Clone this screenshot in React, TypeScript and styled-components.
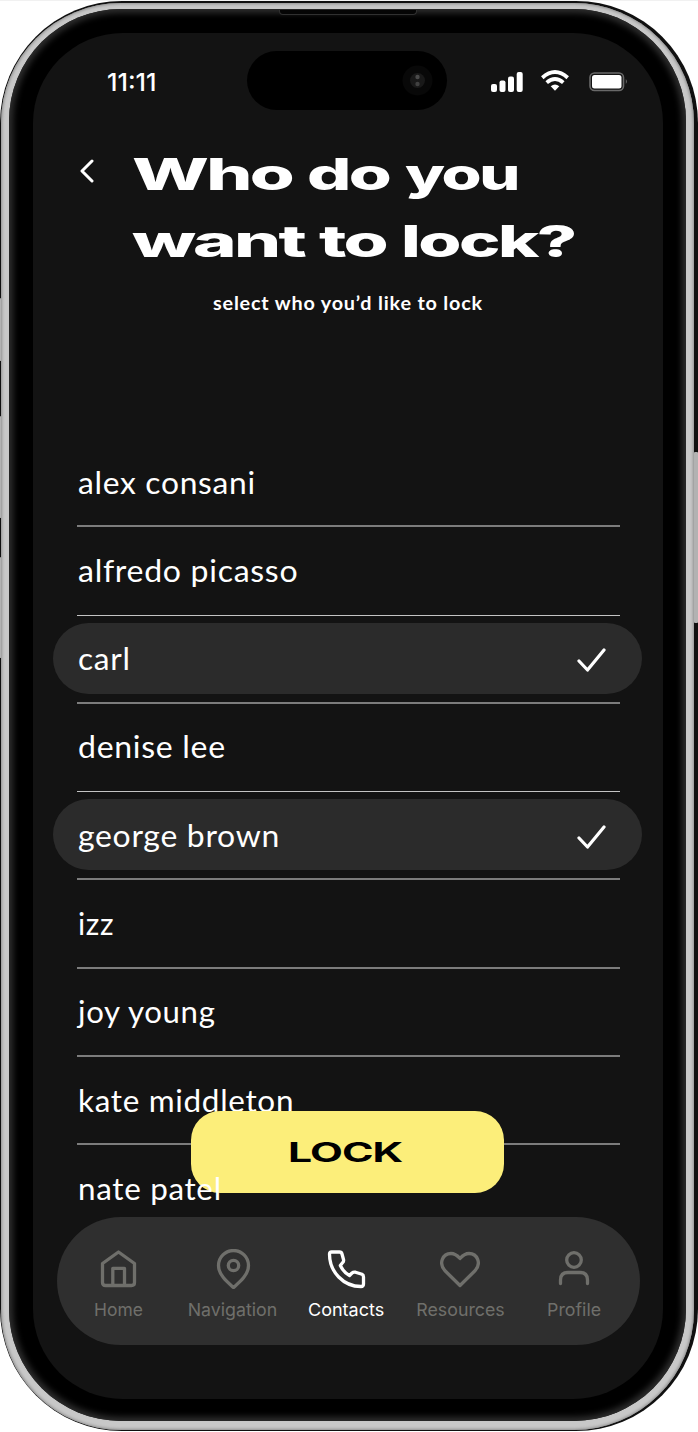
import React, { useLayoutEffect, useRef, useState } from "react";
import styled, { createGlobalStyle } from "styled-components";

const GlobalStyle = createGlobalStyle`
  * { box-sizing: border-box; }
  body { margin: 0; background: #fff; overflow: hidden; }
  button { font: inherit; border: 0; padding: 0; background: none; }
`;

const Stage = styled.div`
  position: relative;
  width: 698px;
  height: 1432px;
  padding-top: 1px;
  border-top: 1px solid #f1f1f1;
  font-family: Lato, "Liberation Sans", sans-serif;
  color: #fff;
`;

const Edge = styled.div`
  height: 1430px;
  margin-top: -1px;
  padding: 2px 4px 1px 1px;
  border-radius: 122px;
  background: #101010;
`;

const Metal = styled.div`
  height: 100%;
  padding: 6px 8px 9px;
  border-radius: 120px;
  background: #c8c8c8;
  box-shadow: inset 0 0 3px 1px #8e8e8e;
`;

const Bezel = styled.div`
  height: 100%;
  padding: 24px 23px 22px 24px;
  border-radius: 112px;
  background: #000;
  box-shadow: inset 0 0 6px 4px #2e2e2e;
`;

const Screen = styled.main`
  height: 1366px;
  padding: 18px 0 0;
  border-radius: 90px;
  background: #131313;
  display: flex;
  flex-direction: column;
`;

const SideButton = styled.i<{ $top: number; $height: number; $right?: boolean }>`
  position: absolute;
  top: ${(p) => p.$top}px;
  ${(p) => (p.$right ? "right: 0; width: 4px;" : "left: 0; width: 1px;")}
  height: ${(p) => p.$height}px;
  border-radius: 1px;
  background: #b2b2b2;
`;

const Speaker = styled.i`
  position: absolute;
  left: 279px;
  top: 9px;
  width: 138px;
  height: 5px;
  border: 1px solid #303030;
  border-top: 0;
  border-radius: 0 0 4px 4px;
  background: #050505;
`;

const StatusBar = styled.header`
  height: 59px;
  display: flex;
  align-items: center;
  padding: 0 35px 0 74px;
`;

const Clock = styled.div`
  width: 140px;
  font: 500 24.7px/30px Inter, sans-serif;
  padding-top: 2px;
`;

const Island = styled.div`
  width: 200px;
  height: 59px;
  border-radius: 30px;
  background: #000;
  display: flex;
  align-items: center;
  justify-content: flex-end;
  padding-right: 14px;
`;

const StatusIcons = styled.svg`
  margin-left: auto;
  margin-top: 2px;
`;

const TitleBar = styled.section`
  display: flex;
  height: 167px;
  padding: 31px 0 0 46px;
`;

const BackButton = styled.button`
  width: 53px;
  height: 59px;
  display: flex;
  align-items: center;
`;

const Title = styled.h1`
  margin: 0;
  font: 800 43.6px/67px Inter, sans-serif;
  letter-spacing: -1.6px;
`;

const TitleLine = styled.span`
  display: flex;
  gap: 15px;
`;

const FitBox = styled.span<{ $width: number }>`
  display: inline-block;
  width: ${(p) => p.$width}px;
  text-align: left;
  white-space: nowrap;
`;

const FitInner = styled.span`
  display: inline-block;
  transform-origin: 0 50%;
`;

/* Stretches a run of text horizontally so that it spans a given width. */
function Fit({ width, children }: { width: number; children: string }) {
  const ref = useRef<HTMLSpanElement>(null);
  const [scale, setScale] = useState(1);
  useLayoutEffect(() => {
    if (ref.current) setScale(width / ref.current.offsetWidth);
  }, [width, children]);
  return (
    <FitBox $width={width}>
      <FitInner ref={ref} style={{ transform: `scaleX(${scale})` }}>
        {children}
      </FitInner>
    </FitBox>
  );
}

const Subtitle = styled.p`
  margin: 0 0 0 180px;
  height: 162px;
  padding-top: 13px;
  font: 700 19.5px/26px Lato, sans-serif;
  letter-spacing: 0.8px;
`;

const List = styled.ul`
  list-style: none;
  margin: 0;
  padding: 0 21px 0 20px;
`;

const Row = styled.li<{ $above?: boolean }>`
  position: relative;
  height: 88.3px;
  z-index: ${(p) => (p.$above ? 2 : 0)};
  display: flex;
  flex-direction: column;
`;

const Pill = styled.div<{ $selected?: boolean }>`
  height: 71px;
  margin-top: 7px;
  padding: 0 36px 0 25px;
  border-radius: 36px;
  background: ${(p) => (p.$selected ? "#2b2b2b" : "transparent")};
  display: flex;
  align-items: center;
  justify-content: space-between;
  font: 400 31.6px/40px Lato, sans-serif;
  letter-spacing: 0.7px;
`;

const Divider = styled.hr<{ $soft?: boolean }>`
  width: 543px;
  height: ${(p) => (p.$soft ? 2 : 1)}px;
  margin: auto 0 0 24px;
  border: 0;
  background: ${(p) => (p.$soft ? "#7c7c7c" : "#c4c4c4")};
`;

const LockButton = styled.button`
  position: absolute;
  z-index: 1;
  left: 191px;
  top: 1110px;
  width: 313px;
  height: 82px;
  padding-right: 5px;
  border-radius: 29px;
  background: #fcee7a;
  color: #000;
  font: 700 26.6px/82px Inter, sans-serif;
  letter-spacing: -0.6px;
`;

const TabBar = styled.nav`
  position: absolute;
  z-index: 3;
  left: 57px;
  top: 1216px;
  width: 583px;
  height: 128px;
  padding: 32px 9px 0 5px;
  border-radius: 64px;
  background: #2f2f2f;
  display: flex;
`;

const Tab = styled.button<{ $active?: boolean }>`
  flex: 1;
  display: flex;
  flex-direction: column;
  align-items: center;
  gap: 9px;
  color: ${(p) => (p.$active ? "#fff" : "#6f6f6b")};
  font: 400 17.8px/24px Inter, sans-serif;
`;

const contacts = [
  { name: "alex consani", width: 178, soft: true },
  { name: "alfredo picasso", width: 220 },
  { name: "carl", width: 53, soft: true, selected: true },
  { name: "denise lee", width: 148 },
  { name: "george brown", width: 202, soft: true, selected: true },
  { name: "izz", width: 36, soft: true },
  { name: "joy young", width: 138, soft: true },
  { name: "kate middleton", width: 216, soft: true },
];

const stroke = {
  fill: "none",
  stroke: "currentColor",
  strokeWidth: 3.3,
  strokeLinecap: "round" as const,
  strokeLinejoin: "round" as const,
};

const tabs = [
  { label: "Home", width: 49, art: <><path d="M3.500 14.500 19.500 3 35.500 14.500V33.500Q35.500 36.500 32.500 36.500H6.500Q3.500 36.500 3.500 33.500Z" /><path d="M13.800 36V19.300H25.500V36" /></> },
  { label: "Navigation", width: 90, art: <><path d="M20.500 38.500C15.500 34 5.500 26.500 5.500 16.500A15 15 0 0 1 35.500 16.500C35.500 26.500 25.500 34 20.500 38.500Z" /><circle cx="20.500" cy="16.500" r="5.200" /></> },
  { label: "Contacts", width: 76, active: true, art: <path d="M3.500 5Q3.500 3 5.500 3H13.500Q15.500 3 16 5L17.500 10.500Q18 12.500 16.500 13.800L14.300 16.500C16.500 21 19.500 24.500 23.500 26.500L26 24Q27.500 22.700 29.500 23.200L36 25.300Q37.500 26 37.500 28V35Q37.500 37.500 35 37.500C17.500 37.500 3.500 23 3.500 5Z" /> },
  { label: "Resources", width: 88, art: <path d="M20 36.500 4.800 21.500C-1.500 14.500 2.500 4.500 11 4.500Q15.500 4.500 20 9.500Q24.500 4.500 29 4.500C37.500 4.500 41.500 14.500 35.200 21.500Z" /> },
  { label: "Profile", width: 54, art: <><circle cx="20" cy="11" r="7.300" /><path d="M6.500 34.500V31Q6.500 23.500 14 23.500H26Q33.500 23.500 33.500 31V34.500" /></> },
];

const CheckMark = styled.svg`
  margin-top: 4px;
`;

function Check() {
  return (
    <CheckMark width="29" height="26" viewBox="0 0 29 26" fill="none" stroke="#fff" strokeWidth="3.200" strokeLinecap="round" strokeLinejoin="round">
      <path d="M2 14 10.500 23 27 3" />
    </CheckMark>
  );
}

export default function App() {
  return (
    <Stage>
      <GlobalStyle />
      <Edge>
        <Metal>
          <Bezel>
            <Screen>
              <StatusBar>
                <Clock><Fit width={49}>11:11</Fit></Clock>
                <Island>
                  <svg width="31" height="31" viewBox="0 0 31 31">
                    <circle cx="15.500" cy="15.500" r="15" fill="#080808" />
                    <circle cx="15.500" cy="15.500" r="7.500" fill="#191919" />
                    <circle cx="15.500" cy="12" r="2.200" fill="#4b4b4b" />
                    <circle cx="15.500" cy="19" r="2.200" fill="#414141" />
                  </svg>
                </Island>
                <StatusIcons width="138" height="24" viewBox="490 70 138 24" fill="#fff">
                  <rect x="491" y="84" width="6" height="8" rx="2" />
                  <rect x="499.500" y="80.500" width="6" height="11.500" rx="2" />
                  <rect x="508" y="76.500" width="6" height="15.500" rx="2" />
                  <rect x="516.700" y="72" width="6" height="20" rx="2" />
                  <g fill="none" stroke="#fff" strokeWidth="3.800">
                    <path d="M542.300 77.700Q555 66.500 567.700 77.700" />
                    <path d="M546.700 82.600Q555 75.400 563.300 82.600" />
                  </g>
                  <path d="M550.700 86.300Q555 82.700 559.300 86.300L555 90.700Z" />
                  <rect x="590" y="73" width="33.500" height="17.500" rx="4.500" fill="none" stroke="#696969" strokeWidth="1.600" />
                  <rect x="592" y="75" width="29.500" height="13.500" rx="2.500" />
                  <path d="M625.800 79v5Q628 81.500 625.800 79Z" fill="#696969" />
                </StatusIcons>
              </StatusBar>
              <TitleBar>
                <BackButton aria-label="Back">
                  <svg width="16" height="24" viewBox="0 0 16 24" fill="none" stroke="#fff" strokeWidth="3" strokeLinecap="round" strokeLinejoin="round">
                    <path d="M13 2 3 12 13 22" />
                  </svg>
                </BackButton>
                <Title>
                  <TitleLine><Fit width={160}>Who</Fit><Fit width={83}>do</Fit><Fit width={113}>you</Fit></TitleLine>
                  <TitleLine><Fit width={172}>want</Fit><Fit width={67}>to</Fit><Fit width={173}>lock?</Fit></TitleLine>
                </Title>
              </TitleBar>
              <Subtitle><Fit width={270}>select who you’d like to lock</Fit></Subtitle>
              <List>
                {contacts.map((c) => (
                  <Row key={c.name}>
                    <Pill $selected={c.selected}>
                      <Fit width={c.width}>{c.name}</Fit>
                      {c.selected && <Check />}
                    </Pill>
                    <Divider $soft={c.soft} />
                  </Row>
                ))}
                <Row $above>
                  <Pill><Fit width={144}>nate patel</Fit></Pill>
                </Row>
              </List>
            </Screen>
          </Bezel>
        </Metal>
      </Edge>
      <LockButton><Fit width={114}>LOCK</Fit></LockButton>
      <TabBar>
        {tabs.map((t) => (
          <Tab key={t.label} $active={t.active}>
            <svg width="40" height="40" viewBox="0 0 40 40" {...stroke}>{t.art}</svg>
            <Fit width={t.width}>{t.label}</Fit>
          </Tab>
        ))}
      </TabBar>
      <Speaker />
      <SideButton $top={297} $height={63} />
      <SideButton $top={415} $height={102} />
      <SideButton $top={556} $height={101} />
      <SideButton $top={451} $height={171} $right />
    </Stage>
  );
}
